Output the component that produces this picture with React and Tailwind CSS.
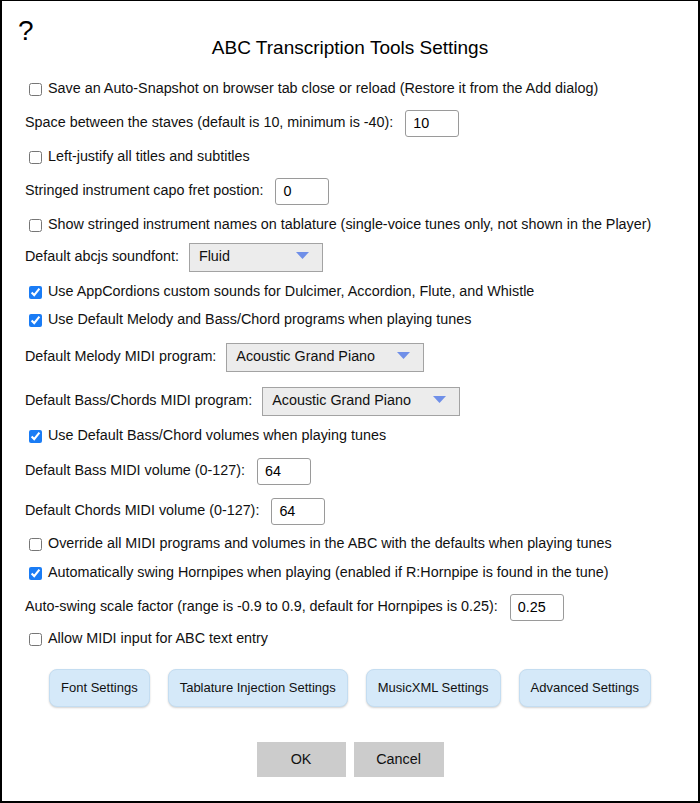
import React from "react";

function Check({ checked, children, mt }) {
  return (
    <div className={`flex items-center h-[20px] ${mt}`}>
      <input
        type="checkbox"
        defaultChecked={checked}
        className="m-0 ml-[4px] mr-[6px] w-[13px] h-[13px] accent-[#1a7cf5]"
      />
      <span>{children}</span>
    </div>
  );
}

function NumInput({ label, value, mt }) {
  return (
    <div className={`flex items-center h-[28px] ${mt}`}>
      <span>{label}</span>
      <input
        type="text"
        defaultValue={value}
        className="ml-[12px] w-[54px] h-[27px] border border-[#9a9a9a] rounded-[3px] px-[7px] text-[14.35px] text-black outline-none"
      />
    </div>
  );
}

function Select({ label, value, width, mt }) {
  return (
    <div className={`flex items-center h-[28px] ${mt}`}>
      <span>{label}</span>
      <div
        className={`ml-[10px] ${width} h-[29px] bg-[#ececec] border border-[#a3a3a3] flex items-center justify-between pl-[9px] pr-[13px]`}
      >
        <span>{value}</span>
        <svg width="13" height="7" viewBox="0 0 13 7" className="-mt-[4px]">
          <polygon points="0,0 13,0 6.5,7" fill="#6f8fe8" />
        </svg>
      </div>
    </div>
  );
}

function BlueBtn({ children }) {
  return (
    <button className="h-[38px] px-[11px] rounded-[8px] bg-[#d5e9f9] border border-[#c4ddf1] shadow-[0_1px_2px_rgba(0,0,0,0.18)] text-[13px] text-[#111]">
      {children}
    </button>
  );
}

export default function App() {
  return (
    <div
      className="relative w-[700px] h-[803px] bg-white border-2 border-t border-black text-[14.35px] text-[#111] overflow-hidden"
      style={{ fontFamily: '"Liberation Sans", Arial, Helvetica, sans-serif' }}
    >
      <div className="absolute left-[16px] top-[12px] text-[28px] leading-[36px] text-black">?</div>
      <div className="flex flex-col pl-[23px]">
        <div className="mt-[35px] h-[24px] leading-[24px] text-center text-[19px] text-black pr-[23px]">
          ABC Transcription Tools Settings
        </div>
        <Check mt="mt-[19px]">
          Save an Auto-Snapshot on browser tab close or reload (Restore it from the Add dialog)
        </Check>
        <NumInput mt="mt-[10px]" label="Space between the staves (default is 10, minimum is -40):" value="10" />
        <Check mt="mt-[10px]">Left-justify all titles and subtitles</Check>
        <NumInput mt="mt-[10px]" label="Stringed instrument capo fret postion:" value="0" />
        <Check mt="mt-[10px]">
          Show stringed instrument names on tablature (single-voice tunes only, not shown in the Player)
        </Check>
        <Select mt="mt-[8px]" label="Default abcjs soundfont:" value="Fluid" width="w-[134px]" />
        <Check mt="mt-[11px]" checked>
          Use AppCordions custom sounds for Dulcimer, Accordion, Flute, and Whistle
        </Check>
        <Check mt="mt-[8px]" checked>
          Use Default Melody and Bass/Chord programs when playing tunes
        </Check>
        <Select mt="mt-[13px]" label="Default Melody MIDI program:" value="Acoustic Grand Piano" width="w-[198px]" />
        <Select mt="mt-[16px]" label="Default Bass/Chords MIDI program:" value="Acoustic Grand Piano" width="w-[198px]" />
        <Check mt="mt-[11px]" checked>
          Use Default Bass/Chord volumes when playing tunes
        </Check>
        <NumInput mt="mt-[11px]" label="Default Bass MIDI volume (0-127):" value="64" />
        <NumInput mt="mt-[12px]" label="Default Chords MIDI volume (0-127):" value="64" />
        <Check mt="mt-[9px]">
          Override all MIDI programs and volumes in the ABC with the defaults when playing tunes
        </Check>
        <Check mt="mt-[9px]" checked>
          Automatically swing Hornpipes when playing (enabled if R:Hornpipe is found in the tune)
        </Check>
        <NumInput
          mt="mt-[10px]"
          label="Auto-swing scale factor (range is -0.9 to 0.9, default for Hornpipes is 0.25):"
          value="0.25"
        />
        <Check mt="mt-[8px]">Allow MIDI input for ABC text entry</Check>
      </div>
      <div className="mt-[20px] flex justify-center gap-[18px]">
        <BlueBtn>Font Settings</BlueBtn>
        <BlueBtn>Tablature Injection Settings</BlueBtn>
        <BlueBtn>MusicXML Settings</BlueBtn>
        <BlueBtn>Advanced Settings</BlueBtn>
      </div>
      <div className="mt-[35px] flex justify-center gap-[8px]">
        <button className="w-[89px] h-[35px] bg-[#cccccc] text-[14.35px] text-[#111]">OK</button>
        <button className="w-[90px] h-[35px] bg-[#cccccc] text-[14.35px] text-[#111]">Cancel</button>
      </div>
    </div>
  );
}
